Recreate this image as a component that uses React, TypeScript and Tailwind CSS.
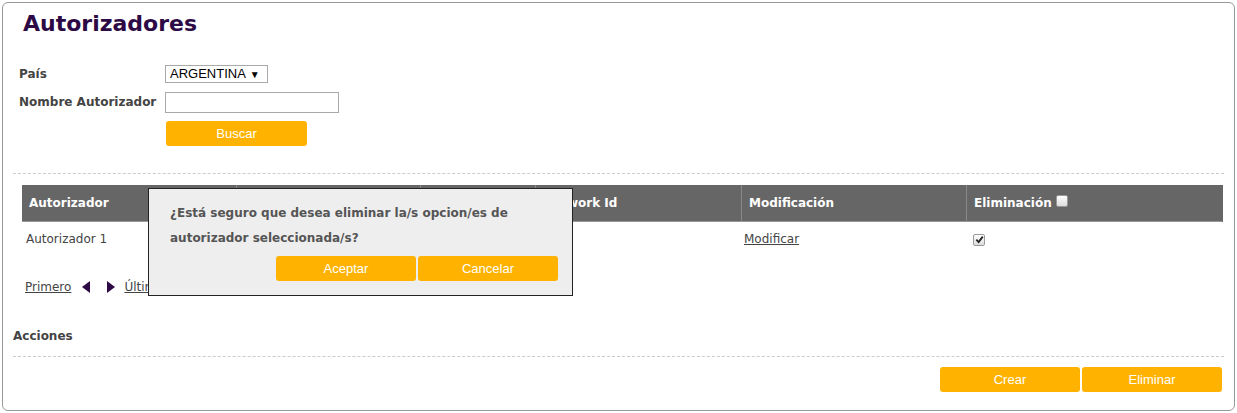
import React from 'react'

const FONT = { fontFamily: '"DejaVu Sans", Verdana, sans-serif' }
const BTN_FONT = { fontFamily: '"Liberation Sans", Arial, sans-serif' }

function OrangeButton({ label, className = '' }: { label: string; className?: string }) {
  return (
    <button
      style={BTN_FONT}
      className={`h-[25px] w-[140px] rounded-[3px] bg-[#ffb300] text-[13px] text-white ${className}`}
    >
      {label}
    </button>
  )
}

function CheckBox({ checked }: { checked?: boolean }) {
  return (
    <span className="inline-flex h-[12px] w-[12px] items-center justify-center rounded-[2px] border border-[#999] bg-gradient-to-b from-[#fff] to-[#ddd] align-middle">
      {checked && (
        <svg viewBox="0 0 10 10" className="h-[9px] w-[9px]">
          <path d="M1.5 5.2 L4 7.8 L8.6 1.8" fill="none" stroke="#222" strokeWidth="2" />
        </svg>
      )}
    </span>
  )
}

// the 2nd and 3rd headers sit under the dialog, so they're left blank
const COLS = [
  { label: 'Autorizador', w: 'w-[214px]' },
  { label: '', w: 'w-[184px]' },
  { label: '', w: 'w-[115px]' },
  { label: 'Network Id', w: 'w-[206px]' },
  { label: 'Modificación', w: 'w-[225px]' },
  { label: 'Eliminación', w: 'w-[256px]' },
]

export default function App() {
  return (
    <div style={FONT} className="relative h-[413px] w-[1237px] bg-white p-[2px] text-[12px] text-[#444]">
      <div className="h-[409px] w-[1233px] rounded-[6px] border border-[#999]">
        {/* Title */}
        <h1 className="ml-[20px] mt-[7px] text-[22px] font-bold leading-[28px] text-[#2d0a45]">
          Autorizadores
        </h1>

        {/* Filters */}
        <div className="ml-[16px] mt-[26px]">
          <div className="flex h-[20px] items-center">
            <label className="w-[146px] font-bold">País</label>
            <span
              style={BTN_FONT}
              className="inline-flex h-[18px] w-[103px] items-center border border-[#a9a9a9] pl-[4px] text-[13px] text-black"
            >
              ARGENTINA <span className="ml-[4px] text-[10px]">▼</span>
            </span>
          </div>
          <div className="mt-[7px] flex h-[22px] items-center">
            <label className="w-[146px] font-bold">Nombre Autorizador</label>
            <input className="h-[21px] w-[174px] border border-[#a9a9a9] outline-none" />
          </div>
          <div className="mt-[8px] flex">
            <span className="w-[147px]" />
            <OrangeButton label="Buscar" className="w-[141px]" />
          </div>
        </div>

        <div className="mx-[10px] mt-[27px] border-t border-dashed border-[#ccc]" />

        {/* Results table */}
        <div className="ml-[19px] mr-[11px] mt-[11px]">
          <div className="flex h-[37px] bg-[#666] font-bold text-white">
            {COLS.map((c, i) => (
              <div
                key={i}
                className={`${c.w} flex items-center border-b border-[#999] pl-[7px] ${i > 0 ? 'border-l border-l-[#888]' : ''}`}
              >
                {c.label}
                {i === 5 && <span className="-mt-[6px] ml-[4px]"><CheckBox /></span>}
              </div>
            ))}
          </div>
          <div className="flex h-[34px] items-center">
            <div className="w-[214px] pl-[4px]">Autorizador 1</div>
            <div className="w-[184px]" />
            <div className="w-[115px]" />
            <div className="w-[206px]" />
            <div className="w-[225px] pl-[3px] underline">Modificar</div>
            <div className="w-[256px] pl-[7px]">
              <CheckBox checked />
            </div>
          </div>
          <div className="ml-[3px] mt-[22px] flex items-center">
            <span className="underline">Primero</span>
            <svg viewBox="0 0 8 12" className="ml-[11px] h-[12px] w-[8px]">
              <path d="M8 0 L0 6 L8 12 Z" fill="#2d0a45" />
            </svg>
            <svg viewBox="0 0 8 12" className="ml-[17px] h-[12px] w-[8px]">
              <path d="M0 0 L8 6 L0 12 Z" fill="#2d0a45" />
            </svg>
            <span className="ml-[9px] underline">Último</span>
          </div>
        </div>

        {/* Actions */}
        <div className="ml-[10px] mt-[31px] font-bold">Acciones</div>
        <div className="mx-[10px] mt-[11px] border-t border-dashed border-[#ccc]" />
        <div className="mr-[12px] mt-[10px] flex justify-end gap-[2px]">
          <OrangeButton label="Crear" />
          <OrangeButton label="Eliminar" />
        </div>
      </div>

      {/* Confirm dialog */}
      <div className="absolute left-[148px] top-[188px] h-[108px] w-[425px] border border-[#222] bg-[#eee] pl-[21px] pr-[14px] pt-[12px]">
        <p className="font-bold leading-[25px] text-[#555]">
          ¿Está seguro que desea eliminar la/s opcion/es de autorizador seleccionada/s?
        </p>
        <div className="mt-[5px] flex justify-end gap-[2px]">
          <OrangeButton label="Aceptar" />
          <OrangeButton label="Cancelar" />
        </div>
      </div>
    </div>
  )
}
